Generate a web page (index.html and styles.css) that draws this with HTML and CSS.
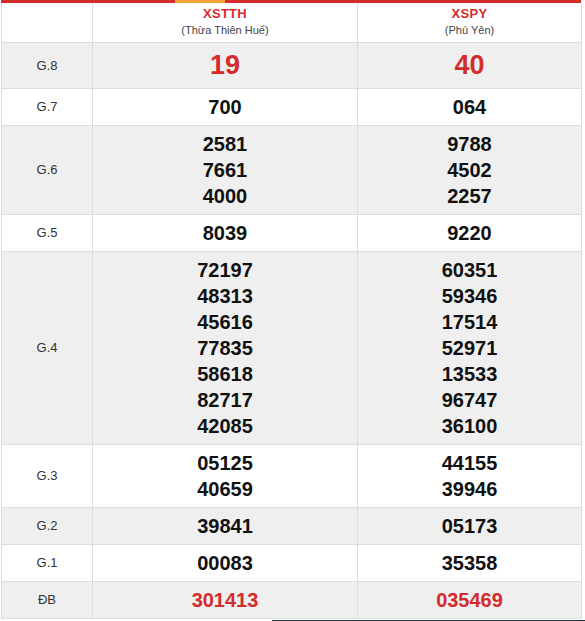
FILE: index.html
```html
<!DOCTYPE html>
<html lang="vi">
<head>
<meta charset="utf-8">
<title>Kết quả xổ số</title>
<link rel="stylesheet" href="styles.css">
</head>
<body>
<div class="wrap">
  <div class="topbar"><span class="accent"></span></div>
  <table class="kq">
    <colgroup><col class="c1"><col class="c2"><col class="c3"></colgroup>
    <thead>
      <tr class="head">
        <th class="lbl"></th>
        <th><div class="prov">XSTTH</div><div class="sub">(Thừa Thiên Huế)</div></th>
        <th><div class="prov">XSPY</div><div class="sub">(Phú Yên)</div></th>
      </tr>
    </thead>
    <tbody>
      <tr class="alt g8"><td class="lbl">G.8</td><td class="red big">19</td><td class="red big">40</td></tr>
      <tr><td class="lbl">G.7</td><td>700</td><td>064</td></tr>
      <tr class="alt"><td class="lbl">G.6</td><td>2581<br>7661<br>4000</td><td>9788<br>4502<br>2257</td></tr>
      <tr><td class="lbl">G.5</td><td>8039</td><td>9220</td></tr>
      <tr class="alt"><td class="lbl">G.4</td><td>72197<br>48313<br>45616<br>77835<br>58618<br>82717<br>42085</td><td>60351<br>59346<br>17514<br>52971<br>13533<br>96747<br>36100</td></tr>
      <tr><td class="lbl">G.3</td><td>05125<br>40659</td><td>44155<br>39946</td></tr>
      <tr class="alt"><td class="lbl">G.2</td><td>39841</td><td>05173</td></tr>
      <tr><td class="lbl">G.1</td><td>00083</td><td>35358</td></tr>
      <tr class="alt"><td class="lbl">ĐB</td><td class="red">301413</td><td class="red">035469</td></tr>
    </tbody>
  </table>
  <div class="footstrip"></div>
</div>
</body>
</html>
```
FILE: styles.css
```css
html, body {
  margin: 0;
  padding: 0;
  background: #fff;
}
body {
  font-family: "Liberation Sans", Arial, sans-serif;
  color: #111;
}
.wrap {
  width: 581px;
  position: relative;
}
.topbar {
  height: 3px;
  background: #d42b2b;
  margin-left: 1px;
  display: flex;
}
.accent {
  display: block;
  width: 50px;
  height: 3px;
  margin-left: 174px;
  background: #f4a23a;
}
.kq {
  width: 580px;
  margin-left: 1px;
  border-collapse: separate;
  border-spacing: 0;
  table-layout: fixed;
  border-left: 1px solid #dcdcdc;
}
.c1 { width: 91px; }
.c2 { width: 265px; }
.c3 { width: 224px; }
.kq th, .kq td {
  border-right: 1px solid #dcdcdc;
  border-bottom: 1px solid #dcdcdc;
  text-align: center;
  vertical-align: middle;
  padding: 5px 0;
}
.kq td {
  font-size: 20px;
  font-weight: bold;
  line-height: 26px;
}
.kq td.lbl {
  font-size: 13px;
  font-weight: normal;
  color: #333;
}
.head th {
  padding: 4px 0 5px;
  font-weight: normal;
}
.prov {
  color: #d42b2b;
  font-weight: bold;
  font-size: 13px;
  line-height: 14px;
  letter-spacing: 0.3px;
}
.sub {
  color: #444;
  font-size: 11px;
  line-height: 14px;
  margin-top: 2px;
}
.alt td {
  background: #efefef;
}
.red {
  color: #d42b2b;
}
.kq td.big {
  font-size: 27px;
  line-height: 35px;
}
.footstrip {
  height: 2px;
  margin-top: 1px;
  margin-left: 272px;
  width: 313px;
  background: #1e2b38;
}
```
